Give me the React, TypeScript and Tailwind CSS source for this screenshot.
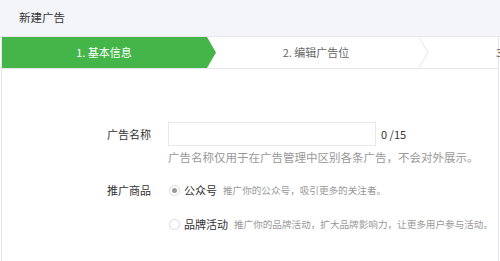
import { useState } from 'react';

const STEPS = ['1. 基本信息', '2. 编辑广告位', '3. 完成'];

export default function App() {
  const [name, setName] = useState('');
  const [kind, setKind] = useState('mp');

  return (
    <div className="w-[500px] h-[261px] overflow-hidden bg-white text-[11px] text-[#333] font-['Noto_Sans_CJK_SC',sans-serif]">
      <div className="h-[37px] bg-[#f4f5f9] border-b border-[#e7e7eb] flex items-center pl-[19px] text-[11.5px] text-[#353535]">
        新建广告
      </div>

      <div className="mx-[1px] border-x border-[#e7e7eb] h-[224px]">
        {/* steps */}
        <div className="relative flex h-[32px] border-b border-[#e7e7eb]">
          <div className="relative w-[212px] shrink-0">
            <svg className="absolute inset-0" width="214" height="31" viewBox="0 0 214 31">
              <polygon points="0,0 205,0 214,15.5 205,31 0,31" fill="#44b549" />
            </svg>
            <div className="relative h-full flex items-center justify-center text-white pr-[8px]">{STEPS[0]}</div>
          </div>
          <div className="relative w-[208px] shrink-0 flex items-center justify-center text-[#666] pr-[4px]">
            {STEPS[1]}
            <svg className="absolute right-[-8px] top-0" width="12" height="31" viewBox="0 0 12 31">
              <polyline points="1,0 10,15.5 1,31" fill="none" stroke="#e7e7eb" strokeWidth="1" />
            </svg>
          </div>
          <div className="flex-1 flex items-center pl-[74px] text-[#666] whitespace-nowrap">{STEPS[2]}</div>
        </div>

        {/* form */}
        <div className="pt-[53px]">
          <div className="flex items-start">
            <div className="w-[149px] shrink-0 h-[24px] flex items-center justify-end text-[#333]">广告名称</div>
            <div className="ml-[17px]">
              <div className="flex items-center">
                <input
                  value={name}
                  onChange={(e) => setName(e.target.value)}
                  className="w-[208px] h-[24px] border border-[#e7e7eb] outline-none px-2"
                />
                <span className="ml-[5px] text-[#353535] whitespace-nowrap">{name.length} /15</span>
              </div>
              <div className="mt-[3px] text-[#999] whitespace-nowrap text-[11.5px]">广告名称仅用于在广告管理中区别各条广告，不会对外展示。</div>
            </div>
          </div>

          <div className="flex items-start mt-[15px]">
            <div className="w-[149px] shrink-0 h-[18px] flex items-center justify-end">推广商品</div>
            <div className="ml-[17px] flex flex-col gap-[16px] shrink-0">
              {[
                { id: 'mp', label: '公众号', desc: '推广你的公众号，吸引更多的关注者。' },
                { id: 'brand', label: '品牌活动', desc: '推广你的品牌活动，扩大品牌影响力，让更多用户参与活动。' },
              ].map((o) => (
                <label key={o.id} className="flex items-center h-[18px] cursor-pointer whitespace-nowrap" onClick={() => setKind(o.id)}>
                  <span className="w-[11px] h-[11px] shrink-0 rounded-full border border-[#d9dadc] flex items-center justify-center ml-[1px]">
                    {kind === o.id && <span className="w-[5px] h-[5px] rounded-full bg-[#9a9a9a]" />}
                  </span>
                  <span className="ml-[4px] text-[#333]">{o.label}</span>
                  <span className="ml-[6px] text-[#999] text-[9.6px]">{o.desc}</span>
                </label>
              ))}
            </div>
          </div>
        </div>
      </div>
    </div>
  );
}
